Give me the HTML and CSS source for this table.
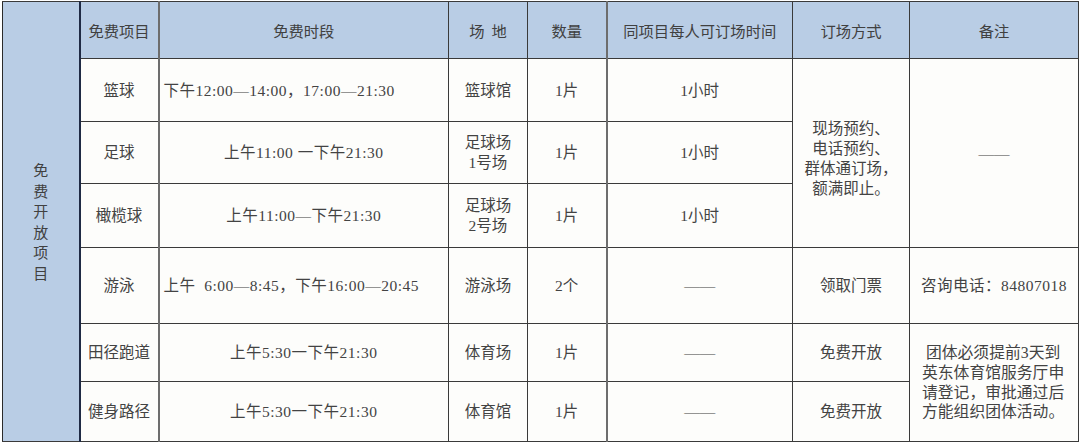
FILE: index.html
```html
<!DOCTYPE html>
<html lang="zh-CN">
<head>
<meta charset="utf-8">
<link rel="stylesheet" href="styles.css">
</head>
<body>
<table class="sched">
  <colgroup>
    <col class="c0"><col class="c1"><col class="c2"><col class="c3"><col class="c4"><col class="c5"><col class="c6"><col class="c7">
  </colgroup>
  <tbody>
    <tr class="r-head">
      <th class="side" rowspan="7"><span class="vert">免<br>费<br>开<br>放<br>项<br>目</span></th>
      <th class="lb">免费项目</th>
      <th class="lg">免费时段</th>
      <th>场&nbsp;&nbsp;地</th>
      <th>数量</th>
      <th class="lg">同项目每人可订场时间</th>
      <th>订场方式</th>
      <th>备注</th>
    </tr>
    <tr class="r1">
      <td class="lb">篮球</td>
      <td class="lg left time">下午12:00—14:00，17:00—21:30</td>
      <td>篮球馆</td>
      <td>1片</td>
      <td class="lg">1小时</td>
      <td rowspan="3" class="multi">现场预约、<br>电话预约、<br>群体通订场，<br>额满即止。</td>
      <td rowspan="3">——</td>
    </tr>
    <tr class="r2">
      <td class="lb">足球</td>
      <td class="lg time">上午11:00 一下午21:30</td>
      <td class="two">足球场<br>1号场</td>
      <td>1片</td>
      <td class="lg">1小时</td>
    </tr>
    <tr class="r3">
      <td class="lb">橄榄球</td>
      <td class="lg time">上午11:00—下午21:30</td>
      <td class="two">足球场<br>2号场</td>
      <td>1片</td>
      <td class="lg">1小时</td>
    </tr>
    <tr class="r4">
      <td class="lb">游泳</td>
      <td class="lg left time">上午&nbsp; 6:00—8:45，下午16:00—20:45</td>
      <td>游泳场</td>
      <td>2个</td>
      <td class="lg">——</td>
      <td>领取门票</td>
      <td class="phone time">咨询电话：84807018</td>
    </tr>
    <tr class="r5">
      <td class="lb">田径跑道</td>
      <td class="lg time">上午5:30一下午21:30</td>
      <td>体育场</td>
      <td>1片</td>
      <td class="lg">——</td>
      <td>免费开放</td>
      <td rowspan="2" class="note">&nbsp;团体必须提前3天到<br>英东体育馆服务厅申<br>请登记，审批通过后<br>方能组织团体活动。</td>
    </tr>
    <tr class="r6">
      <td class="lb">健身路径</td>
      <td class="lg time">上午5:30一下午21:30</td>
      <td>体育馆</td>
      <td>1片</td>
      <td class="lg">——</td>
      <td>免费开放</td>
    </tr>
  </tbody>
</table>
</body>
</html>
```

FILE: styles.css
```css
html, body {
  margin: 0;
  padding: 0;
  background: #ffffff;
}
body {
  padding: 1px 0 0 2px;
  font-family: "Liberation Serif", "Noto Sans CJK SC", serif;
  color: #434343;
}
.sched {
  border-collapse: collapse;
  table-layout: fixed;
  width: 1076px;
  background: #fdfdfb;
}
.c0 { width: 77px; }
.c1 { width: 79px; }
.c2 { width: 290px; }
.c3 { width: 79px; }
.c4 { width: 79px; }
.c5 { width: 186px; }
.c6 { width: 117px; }
.c7 { width: 169px; }

.sched th, .sched td {
  border: 1px solid #3a3a3a;
  padding: 0;
  text-align: center;
  vertical-align: middle;
  font-size: 15.5px;
  line-height: 21px;
  font-weight: normal;
  white-space: nowrap;
}
.sched th {
  background: #b9cde5;
  font-family: "Noto Sans CJK SC", "Liberation Sans", sans-serif;
  font-size: 15.3px;
  color: #404040;
}
.sched th.side {
  background: #b9cde5;
  border-right: 2px solid #1f2a44;
  border-left: 1px solid #2a2a2a;
}
.vert {
  display: inline-block;
  font-size: 15px;
  line-height: 20.5px;
}
.sched .lb { border-left: 2px solid #1f2a44; }
.sched .lg { border-left: 2px solid #6d6d6d; }
.sched td.left {
  text-align: left;
  padding-left: 4px;
}
.sched td.time { letter-spacing: 0.5px; }
.r-head { height: 57px; }
.r1 { height: 63px; }
.r2 { height: 62px; }
.r3 { height: 64px; }
.r4 { height: 76px; }
.r5 { height: 58px; }
.r6 { height: 60px; }
.sched td.two { line-height: 20px; }
.sched td.multi {
  line-height: 20px;
  padding-top: 11px;
}
.sched td.phone {
  text-align: left;
  padding-left: 11px;
}
.sched td.note {
  font-size: 15.8px;
  line-height: 19.6px;
  text-align: left;
  padding-left: 12px;
}
```
